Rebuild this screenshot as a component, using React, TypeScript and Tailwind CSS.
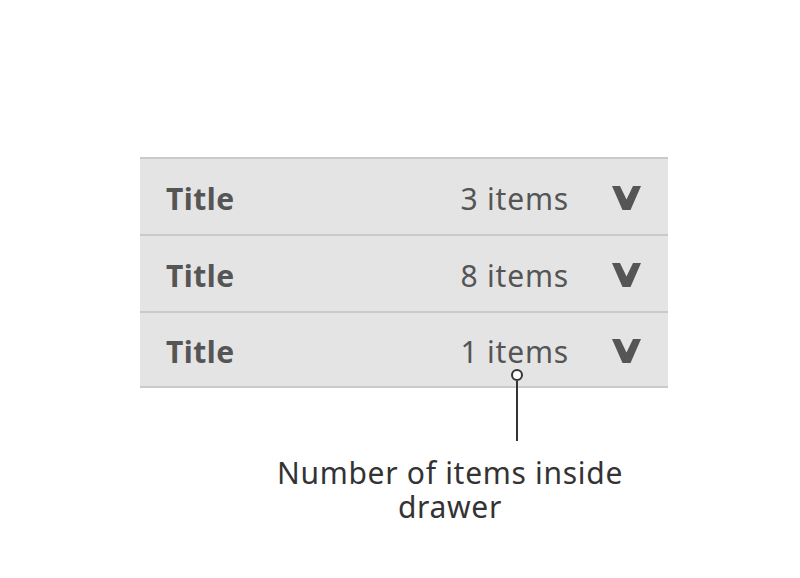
import React from 'react';

const rows = [
  { title: 'Title', count: '3 items' },
  { title: 'Title', count: '8 items' },
  { title: 'Title', count: '1 items' },
];

function Chevron() {
  return (
    <svg width="29" height="24" viewBox="0 0 29 24" className="shrink-0 -mt-[2px]">
      <polygon points="0,0 8,0 14.5,13.5 21,0 29,0 18.5,24 10.5,24" fill="#555555" />
    </svg>
  );
}

export default function App() {
  return (
    <div
      className="w-[800px] h-[578px] bg-white pt-[157px]"
      style={{ fontFamily: '"Noto Sans", "Open Sans", sans-serif' }}
    >
      <div className="relative ml-[140px] w-[528px]">
        {rows.map((r, i) => (
          <div
            key={i}
            className={
              'flex items-center h-[77px] bg-[#e4e4e4] border-t-2 border-[#cacaca] pl-[26px] pr-[27px] pt-[4px] ' +
              (i === rows.length - 1 ? 'border-b-2' : '')
            }
          >
            <span className="text-[30px] font-bold text-[#555555] leading-none tracking-[0.5px]">{r.title}</span>
            <span className="ml-auto mr-[43px] text-[30px] text-[#555555] leading-none tracking-[0.8px]">{r.count}</span>
            <Chevron />
          </div>
        ))}
        {/* callout pin */}
        <div className="absolute left-[371px] top-[212px] flex flex-col items-center">
          <div className="w-[12px] h-[12px] rounded-full border-2 border-[#333333] bg-white" />
          <div className="w-[2px] h-[60px] bg-[#333333]" />
        </div>
      </div>
      <div className="mt-[70px] ml-[200px] w-[500px] flex flex-col items-center gap-[4px] text-[30px] leading-[30px] text-[#333333] tracking-[0.7px]">
        <div>Number of items inside</div>
        <div>drawer</div>
      </div>
    </div>
  );
}
